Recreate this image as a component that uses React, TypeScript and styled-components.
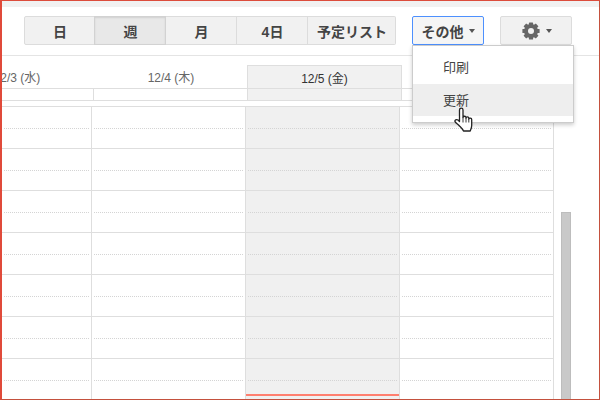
import * as React from "react"
import styled, { createGlobalStyle } from "styled-components"

const Global = createGlobalStyle`
  html, body { margin: 0; padding: 0; background: #fff; }
  * { box-sizing: border-box; }
`

const Frame = styled.div`
  position: relative;
  width: 600px;
  height: 400px;
  overflow: hidden;
  background: #fff;
  border-style: solid;
  border-color: #dc4c3c #c4513e #c4513e #e04a3a;
  border-width: 1px 1px 1px 2px;
  font-family: "Liberation Sans", "Noto Sans CJK JP", sans-serif;
  color: #444;
`

const TopStrip = styled.div`
  height: 6px;
  background: #f1f1f1;
`

const Toolbar = styled.div`
  display: flex;
  align-items: flex-start;
  height: 49px;
  padding: 9px 0 0 22px;
  border-bottom: 1px solid #e4e4e4;
`

const ViewGroup = styled.div`
  display: flex;
  margin-right: 16px;
`

const ViewButton = styled.div<{ $active?: boolean; $first?: boolean; $wide?: boolean }>`
  width: ${p => (p.$wide ? 88 : 71)}px;
  height: 29px;
  padding-left: 1px;
  display: flex;
  align-items: center;
  justify-content: center;
  font-size: 14px;
  font-weight: bold;
  color: #444;
  background: ${p => (p.$active ? "#e8e8e8" : "#f1f1f1")};
  border: 1px solid ${p => (p.$active ? "#d2d2d2" : "#dcdcdc")};
  border-left-width: ${p => (p.$first ? 1 : 0)}px;
  box-shadow: ${p => (p.$active ? "inset 0 1px 2px rgba(0,0,0,.1), -1px 0 0 #d2d2d2" : "none")};
  border-radius: ${p => (p.$first ? "2px 0 0 2px" : p.$wide ? "0 2px 2px 0" : "0")};
`

const MoreButton = styled.div`
  width: 72px;
  height: 29px;
  display: flex;
  align-items: center;
  justify-content: center;
  gap: 5px;
  font-size: 14px;
  font-weight: bold;
  background: #f5f5f5;
  border: 1px solid #4d90fe;
  border-radius: 2px;
`

const GearButton = styled.div`
  width: 72px;
  height: 29px;
  margin-left: 16px;
  padding-left: 2px;
  display: flex;
  align-items: center;
  justify-content: center;
  gap: 6px;
  background: #f1f1f1;
  border: 1px solid #dcdcdc;
  border-radius: 2px;
`

const Caret = styled.span`
  width: 0;
  height: 0;
  border-left: 3.5px solid transparent;
  border-right: 3.5px solid transparent;
  border-top: 4px solid #555;
`

const Body = styled.div`
  display: flex;
  padding-top: 9px;
`

const Calendar = styled.div`
  width: 552px;
  flex: none;
`

const HeadRow = styled.div`
  display: grid;
  grid-template-columns: 154px 154px 154px 152px;
  height: 24px;
  margin-left: -62px;
`

const HeadCell = styled.div<{ $today?: boolean }>`
  display: flex;
  align-items: center;
  justify-content: center;
  font-size: 12px;
  color: ${p => (p.$today ? "#333" : "#666")};
  background: ${p => (p.$today ? "#f1f1f1" : "#fff")};
  border-bottom: 1px solid #dedede;
  ${p => p.$today && "border: 1px solid #dedede; margin-left: -1px;"}
`

const AllDayRow = styled.div`
  display: grid;
  grid-template-columns: 154px 154px 154px 152px;
  height: 12px;
  margin-left: -62px;
`

const AllDayCell = styled.div<{ $today?: boolean }>`
  border-right: 1px solid #dedede;
  border-bottom: 1px solid #dedede;
  background: ${p => (p.$today ? "#f1f1f1" : "#fff")};
  ${p => p.$today && "border-left: 1px solid #dedede; margin-left: -1px;"}
`

const Grid = styled.div`
  display: grid;
  grid-template-columns: 90px 154px 154px 154px;
  margin-top: 5px;
  border-top: 1px solid #dedede;
`

const Column = styled.div<{ $today?: boolean }>`
  position: relative;
  height: 300px;
  background: ${p => (p.$today ? "#f0f0f0" : "#fff")};
  border-right: 1px solid #dedede;
  ${p => p.$today && "border-left: 1px solid #dedede; margin-left: -1px;"}
`

const Hour = styled.div`
  height: 42px;
  border-bottom: 1px solid #dedede;
  &::before {
    content: "";
    display: block;
    height: 21px;
    margin: 0 2px;
    border-bottom: 1px dotted #d4d4d4;
  }
`

const NowLine = styled.div`
  position: absolute;
  left: 0;
  right: 0;
  top: 287px;
  height: 2px;
  background: #ff7f6f;
`

const Scrollbar = styled.div`
  width: 10px;
  height: 200px;
  margin-left: 7px;
  margin-top: 147px;
  background: #c9c9c9;
  border: 1px solid #bdbdbd;
  border-bottom: none;
`

const Menu = styled.div`
  position: absolute;
  left: 410px;
  top: 44px;
  width: 162px;
  height: 78px;
  padding-top: 5px;
  background: #fff;
  border: 1px solid #ccc;
  box-shadow: 0 2px 4px rgba(0, 0, 0, .2);
`

const MenuItem = styled.div<{ $hover?: boolean }>`
  height: ${p => (p.$hover ? 32 : 33)}px;
  padding: 0 0 2px 30px;
  display: flex;
  align-items: center;
  font-size: 13px;
  color: #444;
  background: ${p => (p.$hover ? "#eee" : "#fff")};
`

const Cursor = styled.svg`
  position: absolute;
  left: 452px;
  top: 106px;
`

const teeth = [0, 45, 90, 135]

const GearIcon = () => (
  <svg width="18" height="18" viewBox="0 0 18 18">
    <circle cx="9" cy="9" r="5" fill="none" stroke="#666" strokeWidth="4" />
    {teeth.map(a => (
      <rect key={a} x="6.9" y="0.4" width="4.2" height="17.2" rx="0.6" fill="#666" transform={`rotate(${a} 9 9)`} />
    ))}
    <circle cx="9" cy="9" r="3" fill="#f1f1f1" />
  </svg>
)

const HandCursor = () => (
  <Cursor width="20" height="26" viewBox="0 0 20 26">
    <path
      d="M5.5 3c0-2.4 3.5-2.4 3.5 0v7.5c0-1.7 3-1.7 3 0v.5c0-1.5 2.8-1.5 2.8.3v.7c.2-1.3 2.9-1.3 2.9.5v6c0 2.5-1 4-1.5 5.5H9.5c-.8-2-2.5-3.5-4-5C4 17 1.5 16 1 14.5c-.5-1.5 1.5-2.5 3-1.5l1.5 1.5z"
      fill="#fff"
      stroke="#222"
      strokeWidth="1.3"
      strokeLinejoin="round"
    />
    <path d="M9 10.5v5M12 11v4.5M14.8 12v3.5" fill="none" stroke="#222" strokeWidth="0.9" />
  </Cursor>
)

const hours = [0, 1, 2, 3, 4, 5, 6, 7]
const views = ["日", "週", "月", "4日", "予定リスト"]

export default function App() {
  return (
    <Frame>
      <Global />
      <TopStrip />
      <Toolbar>
        <ViewGroup>
          {views.map((v, i) => (
            <ViewButton key={v} $active={v === "週"} $first={i === 0} $wide={i === views.length - 1}>
              {v}
            </ViewButton>
          ))}
        </ViewGroup>
        <MoreButton>
          その他 <Caret />
        </MoreButton>
        <GearButton>
          <GearIcon />
          <Caret />
        </GearButton>
      </Toolbar>
      <Body>
        <Calendar>
          <HeadRow>
            <HeadCell>12/3 (水)</HeadCell>
            <HeadCell>12/4 (木)</HeadCell>
            <HeadCell $today>12/5 (金)</HeadCell>
            <HeadCell />
          </HeadRow>
          <AllDayRow>
            <AllDayCell />
            <AllDayCell />
            <AllDayCell $today />
            <AllDayCell />
          </AllDayRow>
          <Grid>
            {[false, false, true, false].map((today, c) => (
              <Column key={c} $today={today}>
                {hours.map(h => <Hour key={h} />)}
                {today && <NowLine />}
              </Column>
            ))}
          </Grid>
        </Calendar>
        <Scrollbar />
      </Body>
      <Menu>
        <MenuItem>印刷</MenuItem>
        <MenuItem $hover>更新</MenuItem>
      </Menu>
      <HandCursor />
    </Frame>
  )
}
